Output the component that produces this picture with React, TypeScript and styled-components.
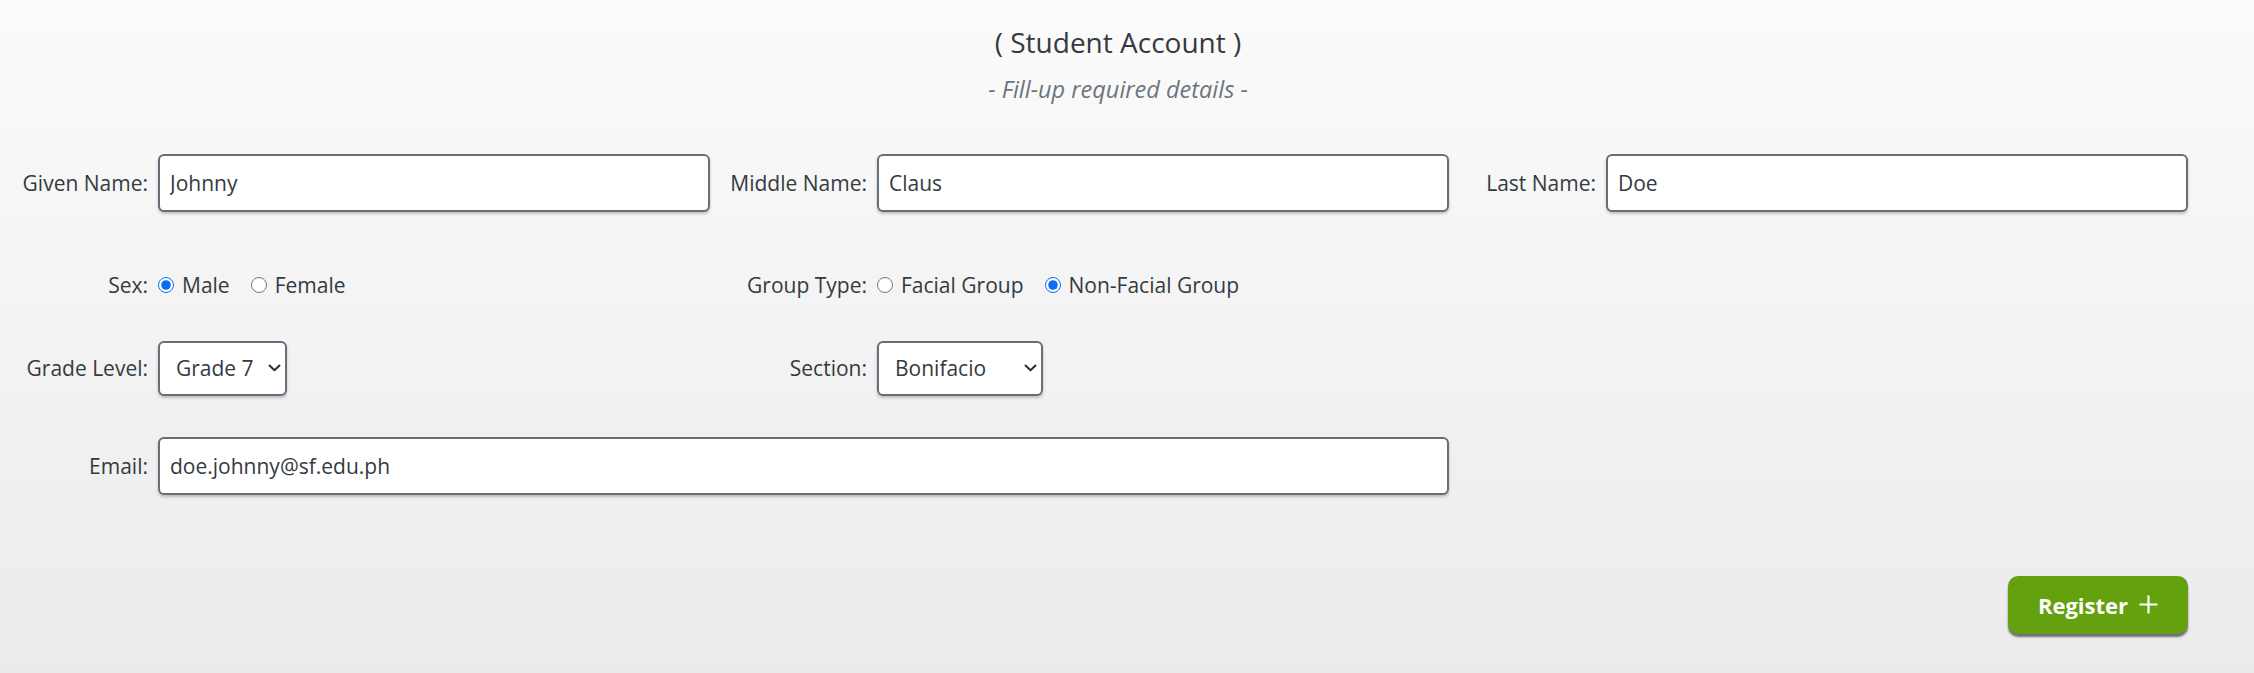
import styled, { createGlobalStyle } from "styled-components";

const GlobalStyle = createGlobalStyle`
  html, body {
    margin: 0;
    padding: 0;
    min-height: 100vh;
  }
  body {
    background: linear-gradient(180deg, #fbfbfb 0%, #f3f3f3 50%, #ebebeb 100%);
    font-family: "Open Sans", "Noto Sans", sans-serif;
    color: #343a40;
  }
`;

const colors = {
  text: "#343a40",
  muted: "#6c757d",
  border: "#666e7a",
  green: "#63a20e",
};

const Page = styled.div`
  min-height: 100vh;
  box-sizing: border-box;
`;

const Header = styled.header`
  padding: 26px 18px 0 0;
  text-align: center;
`;

const Title = styled.h3`
  margin: 0;
  font-size: 28px;
  font-weight: 400;
  line-height: 1.2;
  color: ${colors.text};
`;

const Subtitle = styled.p`
  margin: 15px 0 0;
  font-size: 23.5px;
  font-style: italic;
  line-height: 1.2;
  color: ${colors.muted};
`;

const Form = styled.form`
  margin-top: 51px;
`;

const FormRow = styled.div<{ $top: number; $height: number }>`
  display: grid;
  grid-template-columns: 148px 552px 147px 572px 137px 582px;
  column-gap: 10px;
  align-items: center;
  margin-top: ${({ $top }) => $top}px;
  height: ${({ $height }) => $height}px;
`;

const Label = styled.label`
  justify-self: end;
  font-size: 21px;
  color: ${colors.text};
  white-space: nowrap;
`;

const TextInput = styled.input<{ $span?: string }>`
  grid-column: ${({ $span }) => $span ?? "auto"};
  box-sizing: border-box;
  width: 100%;
  height: 58px;
  padding: 0 10px;
  border: 2px solid ${colors.border};
  border-radius: 6px;
  background: #fff;
  box-shadow: 0 2px 3px rgba(0, 0, 0, 0.22);
  font-family: inherit;
  font-size: 21px;
  color: ${colors.text};
  outline: none;
`;

const RadioGroup = styled.div`
  display: flex;
  align-items: center;
  gap: 21px;
`;

const RadioOption = styled.label`
  display: flex;
  align-items: center;
  gap: 8px;
  font-size: 21px;
  color: ${colors.text};
  white-space: nowrap;
`;

const Radio = styled.input`
  margin: 0;
  width: 16px;
  height: 16px;
  accent-color: #0b6cf5;
`;

const SelectWrap = styled.div<{ $width: number }>`
  position: relative;
  width: ${({ $width }) => $width}px;
  height: 55px;
`;

const Select = styled.select`
  appearance: none;
  box-sizing: border-box;
  width: 100%;
  height: 100%;
  padding: 0 30px 0 16px;
  border: 2px solid ${colors.border};
  border-radius: 6px;
  background: #fff;
  box-shadow: 0 2px 3px rgba(0, 0, 0, 0.22);
  font-family: inherit;
  font-size: 21px;
  color: ${colors.text};
  outline: none;
`;

const Chevron = styled.svg`
  position: absolute;
  right: 6px;
  top: 50%;
  margin-top: -4px;
  pointer-events: none;
`;

const RegisterButton = styled.button`
  grid-column: 6;
  justify-self: end;
  display: flex;
  align-items: center;
  justify-content: center;
  gap: 11px;
  width: 180px;
  height: 58px;
  border: none;
  border-radius: 10px;
  background: ${colors.green};
  box-shadow: 0 3px 2px rgba(70, 70, 80, 0.75);
  color: #fff;
  font-family: inherit;
  font-size: 22px;
  font-weight: 700;
  cursor: pointer;
`;

type SelectFieldProps = {
  width: number;
  value: string;
  options: string[];
};

const SelectField = ({ width, value, options }: SelectFieldProps) => (
  <SelectWrap $width={width}>
    <Select defaultValue={value}>
      {options.map((o) => (
        <option key={o}>{o}</option>
      ))}
    </Select>
    <Chevron width="13" height="8" viewBox="0 0 13 8">
      <path d="M1.5 1.5 L6.5 6.3 L11.5 1.5" fill="none" stroke="#2b2f36" strokeWidth="2" strokeLinecap="round" strokeLinejoin="round" />
    </Chevron>
  </SelectWrap>
);

const PlusIcon = () => (
  <svg width="19" height="19" viewBox="0 0 19 19">
    <path d="M9.5 0.5 V18.5 M0.5 9.5 H18.5" stroke="#fff" strokeWidth="2.2" />
  </svg>
);

export default function App() {
  return (
    <Page>
      <GlobalStyle />
      <Header>
        <Title>( Student Account )</Title>
        <Subtitle>- Fill-up required details -</Subtitle>
      </Header>
      <Form onSubmit={(e) => e.preventDefault()}>
        <FormRow $top={0} $height={58}>
          <Label>Given Name:</Label>
          <TextInput defaultValue="Johnny" />
          <Label>Middle Name:</Label>
          <TextInput defaultValue="Claus" />
          <Label>Last Name:</Label>
          <TextInput defaultValue="Doe" />
        </FormRow>
        <FormRow $top={53} $height={40}>
          <Label>Sex:</Label>
          <RadioGroup>
            <RadioOption>
              <Radio type="radio" name="sex" defaultChecked />
              Male
            </RadioOption>
            <RadioOption>
              <Radio type="radio" name="sex" />
              Female
            </RadioOption>
          </RadioGroup>
          <Label>Group Type:</Label>
          <RadioGroup>
            <RadioOption>
              <Radio type="radio" name="group" />
              Facial Group
            </RadioOption>
            <RadioOption>
              <Radio type="radio" name="group" defaultChecked />
              Non-Facial Group
            </RadioOption>
          </RadioGroup>
        </FormRow>
        <FormRow $top={36} $height={55}>
          <Label>Grade Level:</Label>
          <SelectField width={129} value="Grade 7" options={["Grade 7", "Grade 8", "Grade 9", "Grade 10"]} />
          <Label>Section:</Label>
          <SelectField width={166} value="Bonifacio" options={["Bonifacio", "Rizal", "Mabini"]} />
        </FormRow>
        <FormRow $top={41} $height={58}>
          <Label>Email:</Label>
          <TextInput $span="2 / 5" defaultValue="doe.johnny@sf.edu.ph" />
        </FormRow>
        <FormRow $top={81} $height={58}>
          <RegisterButton type="submit">
            Register
            <PlusIcon />
          </RegisterButton>
        </FormRow>
      </Form>
    </Page>
  );
}
